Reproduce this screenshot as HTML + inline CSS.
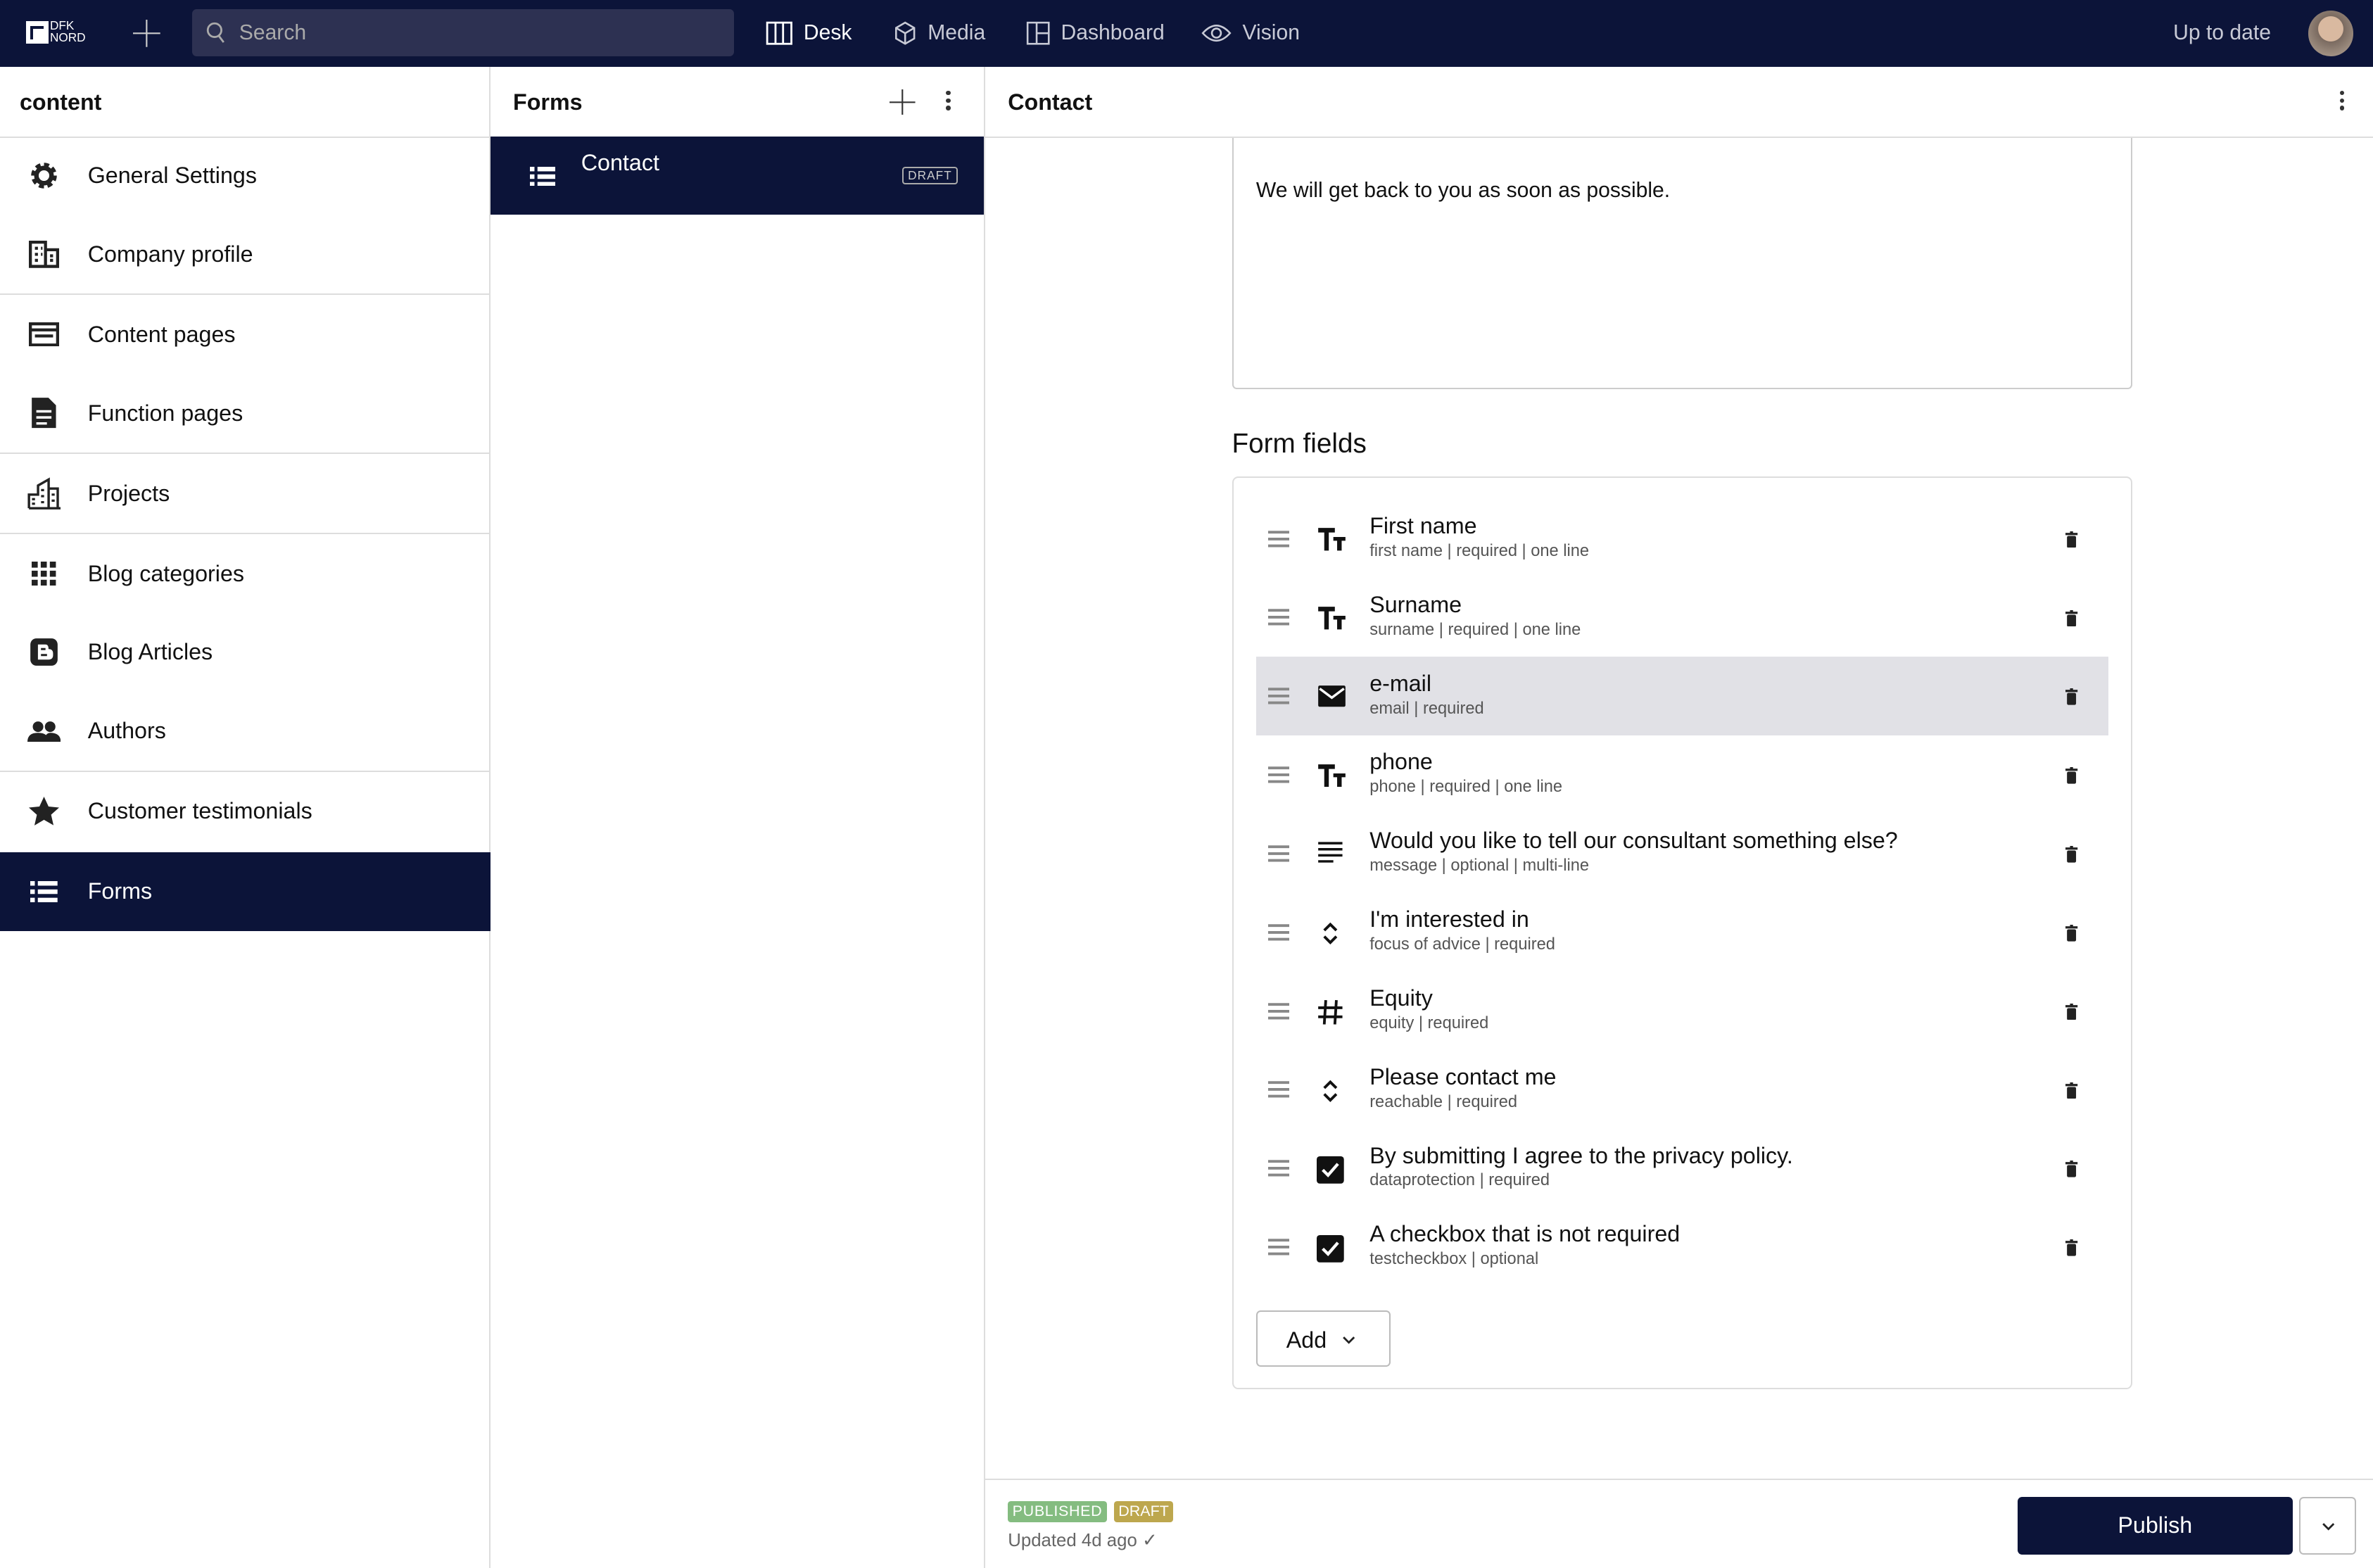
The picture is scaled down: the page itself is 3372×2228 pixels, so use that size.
<!DOCTYPE html>
<html><head><meta charset="utf-8"><style>
*{box-sizing:border-box;margin:0;padding:0}
html,body{width:3372px;height:2228px;overflow:hidden;background:#fff}
#r{zoom:2.1505;width:1568px;height:1036px;position:relative;font-family:"Liberation Sans",sans-serif;color:#111}
.a{position:absolute}
.top{left:0;top:0;width:1568px;height:44px;background:#0c1439;color:#fff}
.nav{top:0;height:44px;display:flex;align-items:center;font-size:14px;color:#c8cad6}
.nav svg{margin-right:7px}
.hdr{font-weight:bold;font-size:15px}
.li{left:0;width:324px;height:52px;display:flex;align-items:center;font-size:15px}
.li .ic{width:58px;display:flex;justify-content:center}
.sep{left:0;width:324px;height:1px;background:#ddd}
.row{left:830px;width:562px;height:52px}
.row .h{position:absolute;left:8px;top:20px}
.row .t{position:absolute;left:75px;top:9px;font-size:15px}
.row .s{position:absolute;left:75px;top:28px;font-size:11px;color:#555}
.row .i{position:absolute;left:40px;top:18px}
.row .d{position:absolute;left:535px;top:21px}
</style></head><body><div id="r">
<div class="a top">
 <div class="a" style="left:17px;top:14px;width:15px;height:15px;background:#fff"><div style="margin:3px;width:9px;height:9px;border:2px solid #0c1439;border-right:none;border-bottom:none"></div></div>
 <div class="a" style="left:33px;top:13px;font-size:8px;line-height:8px;color:#fff">DFK<br>NORD</div>
 <svg class="a" style="left:88px;top:13px" width="18" height="18"><path d="M9 0v18M0 9h18" stroke="#ccc" stroke-width="1"/></svg>
 <div class="a" style="left:127px;top:6px;width:358px;height:31px;background:#2d3152;border-radius:3px"></div>
 <svg class="a" style="left:136px;top:14px" width="14" height="15" viewBox="0 0 14 15"><circle cx="6" cy="6" r="4.5" fill="none" stroke="#aaa" stroke-width="1.3"/><path d="M9 10l3 4" stroke="#aaa" stroke-width="1.3"/></svg>
 <div class="a" style="left:158px;top:14px;font-size:14px;color:#aaa">Search</div>
 <div class="a nav" style="left:506px;color:#fff"><svg width="18" height="16"><rect x="1" y="1" width="16" height="14" fill="none" stroke="#fff" stroke-width="1.3"/><path d="M6.5 1v14M11.5 1v14" stroke="#fff" stroke-width="1.3"/></svg>Desk</div>
 <div class="a nav" style="left:590px"><svg width="16" height="16"><path d="M8 1l6 3.5v7L8 15 2 11.5v-7z M2 4.5l6 3.5 6-3.5M8 8v7" fill="none" stroke="#c8cad6" stroke-width="1.2"/></svg>Media</div>
 <div class="a nav" style="left:678px"><svg width="16" height="16"><rect x="1" y="1" width="14" height="14" fill="none" stroke="#c8cad6" stroke-width="1.2"/><path d="M7 1v14M7 8h8" stroke="#c8cad6" stroke-width="1.2"/></svg>Dashboard</div>
 <div class="a nav" style="left:794px"><svg width="20" height="14"><path d="M1 7Q10-3 19 7Q10 17 1 7z" fill="none" stroke="#c8cad6" stroke-width="1.2"/><circle cx="10" cy="7" r="3" fill="none" stroke="#c8cad6" stroke-width="1.2"/></svg>Vision</div>
 <div class="a nav" style="left:1436px">Up to date</div>
 <div class="a" style="left:1525px;top:7px;width:30px;height:30px;border-radius:50%;background:radial-gradient(circle at 50% 40%,#d9b9a0 0 35%,#7a6a60 36%,#b8a898 100%)"></div>
</div>
<div class="a" style="left:323px;top:44px;width:1px;height:992px;background:#ddd"></div>
<div class="a" style="left:650px;top:44px;width:1px;height:992px;background:#ddd"></div>
<div class="a" style="left:0;top:90px;width:1568px;height:1px;background:#ddd"></div>
<div class="a hdr" style="left:13px;top:59px">content</div>
<div class="a hdr" style="left:339px;top:59px">Forms</div>
<svg class="a" style="left:588px;top:59px" width="17" height="17"><path d="M8.5 0v17M0 8.5h17" stroke="#333" stroke-width="1"/></svg>
<div class="a" style="left:625px;top:60px;width:3px;font-size:0"><i style="display:block;width:3px;height:3px;background:#333;border-radius:50%;margin-bottom:2px"></i><i style="display:block;width:3px;height:3px;background:#333;border-radius:50%;margin-bottom:2px"></i><i style="display:block;width:3px;height:3px;background:#333;border-radius:50%"></i></div>
<div class="a hdr" style="left:666px;top:59px">Contact</div>
<div class="a" style="left:1546px;top:60px;width:3px;font-size:0"><i style="display:block;width:3px;height:3px;background:#333;border-radius:50%;margin-bottom:2px"></i><i style="display:block;width:3px;height:3px;background:#333;border-radius:50%;margin-bottom:2px"></i><i style="display:block;width:3px;height:3px;background:#333;border-radius:50%"></i></div>
<div class="a li" style="top:90px"><span class="ic"><svg width="20" height="20" viewBox="0 0 20 20"><circle cx="10" cy="10" r="6.5" fill="none" stroke="#222" stroke-width="4" stroke-dasharray="3 2.1"/><circle cx="10" cy="10" r="5" fill="none" stroke="#222" stroke-width="3"/></svg></span>General Settings</div>
<div class="a li" style="top:142px"><span class="ic"><svg width="20" height="18"><path d="M1 1h10v16H1zM11 6h8v11h-8" fill="none" stroke="#222" stroke-width="2"/><path d="M4 5h2M8 5h1M4 9h2M8 9h1M4 13h2M14 10h2M14 13h2" stroke="#222" stroke-width="2"/></svg></span>Company profile</div>
<div class="a sep" style="top:194px"></div>
<div class="a li" style="top:195px"><span class="ic"><svg width="20" height="16"><rect x="1" y="1" width="18" height="14" fill="none" stroke="#222" stroke-width="2"/><path d="M1 5h18M4 9h12" stroke="#222" stroke-width="2"/></svg></span>Content pages</div>
<div class="a li" style="top:247px"><span class="ic"><svg width="18" height="22"><path d="M1 1h11l5 5v15H1z" fill="#222"/><path d="M4 10h10M4 14h10M4 18h7" stroke="#fff" stroke-width="1.6"/></svg></span>Function pages</div>
<div class="a sep" style="top:299px"></div>
<div class="a li" style="top:300px"><span class="ic"><svg width="22" height="22"><path d="M1 21V12h6V6l7-4v19M14 8h6v13M1 21h21" fill="none" stroke="#222" stroke-width="1.6"/><path d="M3 15h2M3 18h2M9 9h2M9 13h2M9 17h2M16 12h2M16 16h2" stroke="#222" stroke-width="1.5"/></svg></span>Projects</div>
<div class="a sep" style="top:352px"></div>
<div class="a li" style="top:353px"><span class="ic"><svg width="16" height="16"><g fill="#222"><rect x="0" y="0" width="4" height="4"/><rect x="6" y="0" width="4" height="4"/><rect x="12" y="0" width="4" height="4"/><rect x="0" y="6" width="4" height="4"/><rect x="6" y="6" width="4" height="4"/><rect x="12" y="6" width="4" height="4"/><rect x="0" y="12" width="4" height="4"/><rect x="6" y="12" width="4" height="4"/><rect x="12" y="12" width="4" height="4"/></g></svg></span>Blog categories</div>
<div class="a li" style="top:405px"><span class="ic"><svg width="20" height="20"><rect x="1" y="1" width="18" height="18" rx="4" fill="#222"/><path d="M6 5h5q2 0 2 3 3 0 3 3v1q0 3-3 3H6z" fill="#fff"/><path d="M8 8h3M8 12h4" stroke="#222" stroke-width="1.4"/></svg></span>Blog Articles</div>
<div class="a li" style="top:457px"><span class="ic"><svg width="22" height="14"><circle cx="7" cy="4" r="3.5" fill="#222"/><circle cx="15" cy="4" r="3.5" fill="#222"/><path d="M0 14q0-6 7-6t7 6zM10 14q2-6 5-6 7 0 7 6z" fill="#222"/></svg></span>Authors</div>
<div class="a sep" style="top:509px"></div>
<div class="a li" style="top:510px"><span class="ic"><svg width="20" height="19"><path d="M10 0l3 6.5 7 .7-5.3 4.7 1.6 7L10 15.3 3.7 19l1.6-7L0 7.2l7-.7z" fill="#222"/></svg></span>Customer testimonials</div>
<div class="a li" style="top:563px;background:#0c1439;color:#fff"><span class="ic"><svg width="18" height="14"><g fill="#fff"><rect x="0" y="0" width="3" height="3"/><rect x="5" y="0" width="13" height="3"/><rect x="0" y="5.5" width="3" height="3"/><rect x="5" y="5.5" width="13" height="3"/><rect x="0" y="11" width="3" height="3"/><rect x="5" y="11" width="13" height="3"/></g></svg></span>Forms</div>
<div class="a" style="left:324px;top:90px;width:326px;height:52px;background:#0c1439;color:#fff">
 <svg class="a" style="left:26px;top:20px" width="17" height="13"><g fill="#fff"><rect x="0" y="0" width="3" height="3"/><rect x="5" y="0" width="12" height="3"/><rect x="0" y="5" width="3" height="3"/><rect x="5" y="5" width="12" height="3"/><rect x="0" y="10" width="3" height="3"/><rect x="5" y="10" width="12" height="3"/></g></svg>
 <div class="a" style="left:60px;top:9px;font-size:15px">Contact</div>
 <div class="a" style="left:272px;top:20px;font-size:8px;border:1px solid #aaa;border-radius:2px;padding:0 3px;color:#ccc;letter-spacing:.5px">DRAFT</div>
</div>
<div class="a" style="left:814px;top:91px;width:595px;height:166px;border:1px solid #ccc;border-top:none;border-radius:0 0 3px 3px"></div>
<div class="a" style="left:830px;top:118px;font-size:14px">We will get back to you as soon as possible.</div>
<div class="a" style="left:814px;top:283px;font-size:18px">Form fields</div>
<div class="a" style="left:814px;top:315px;width:595px;height:603px;border:1px solid #ddd;border-radius:4px"></div>
<div class="a" style="left:830px;top:434px;width:563px;height:52px;background:#e1e1e6"></div>
<div id="rows"></div>
<div class="a" style="left:830px;top:866px;width:89px;height:37px;border:1px solid #bbb;border-radius:3px;font-size:15px;padding:10px 0 0 19px">Add <svg width="9" height="6" style="margin-left:6px;vertical-align:2px"><path d="M1 1l3.5 3.5L8 1" fill="none" stroke="#222" stroke-width="1.3"/></svg></div>
<div class="a" style="left:651px;top:977px;width:917px;height:1px;background:#ddd"></div>
<div class="a" style="left:666px;top:992px;font-size:10px;color:#fff;background:#84bc80;border-radius:2px;padding:1px 3px;letter-spacing:.3px">PUBLISHED</div>
<div class="a" style="left:736px;top:992px;font-size:10px;color:#fff;background:#bda74e;border-radius:2px;padding:1px 3px">DRAFT</div>
<div class="a" style="left:666px;top:1011px;font-size:12px;color:#666">Updated 4d ago ✓</div>
<div class="a" style="left:1333px;top:989px;width:182px;height:38px;background:#0c1439;border-radius:3px;color:#fff;font-size:15px;text-align:center;line-height:38px">Publish</div>
<div class="a" style="left:1519px;top:989px;width:38px;height:38px;border:1px solid #bbb;border-radius:3px"><svg class="a" style="left:14px;top:16px" width="9" height="6"><path d="M1 1l3.5 3.5L8 1" fill="none" stroke="#222" stroke-width="1.3"/></svg></div>
</div>
<script>
var T='<svg width="20" height="16"><path d="M1 1h11v3H8v12H5V4H1zM11 7h8v2.5h-2.5V16h-3V9.5H11z" fill="#111"/></svg>';
var M='<svg width="20" height="16"><rect x="1" y="1" width="18" height="14" rx="1" fill="#111"/><path d="M2 3l8 6 8-6" fill="none" stroke="#fff" stroke-width="1.6"/></svg>';
var L='<svg width="18" height="14"><path d="M1 1h16M1 5h16M1 9h16M1 13h10" stroke="#111" stroke-width="1.6"/></svg>';
var U='<svg width="18" height="18"><path d="M5 7l4-4 4 4M5 11l4 4 4-4" fill="none" stroke="#111" stroke-width="1.8"/></svg>';
var H='<svg width="18" height="18"><path d="M6 1L5 17M13 1l-1 16M1 6h16M1 12h16" stroke="#111" stroke-width="1.8"/></svg>';
var C='<svg width="18" height="18"><rect x="0" y="0" width="18" height="18" rx="2" fill="#111"/><path d="M4 9l3.5 3.5L14 5" fill="none" stroke="#fff" stroke-width="2"/></svg>';
var rows=[[T,"First name","first name | required | one line"],[T,"Surname","surname | required | one line"],[M,"e-mail","email | required"],[T,"phone","phone | required | one line"],[L,"Would you like to tell our consultant something else?","message | optional | multi-line"],[U,"I'm interested in","focus of advice | required"],[H,"Equity","equity | required"],[U,"Please contact me","reachable | required"],[C,"By submitting I agree to the privacy policy.","dataprotection | required"],[C,"A checkbox that is not required","testcheckbox | optional"]];
var h='';rows.forEach(function(r,i){h+='<div class="a row" style="top:'+(330+i*52)+'px"><svg class="h" width="14" height="12"><path d="M0 1.5h14M0 6h14M0 10.5h14" stroke="#888" stroke-width="1.8"/></svg><span class="i">'+r[0]+'</span><div class="t">'+r[1]+'</div><div class="s">'+r[2]+'</div><svg class="d" width="8" height="11"><rect x="0" y="1" width="8" height="1.5" fill="#222"/><rect x="3" y="0" width="2" height="1.5" fill="#222"/><rect x="1" y="3" width="6" height="8" rx="1" fill="#222"/></svg></div>';});
document.getElementById('rows').outerHTML=h;
</script>
</body></html>
